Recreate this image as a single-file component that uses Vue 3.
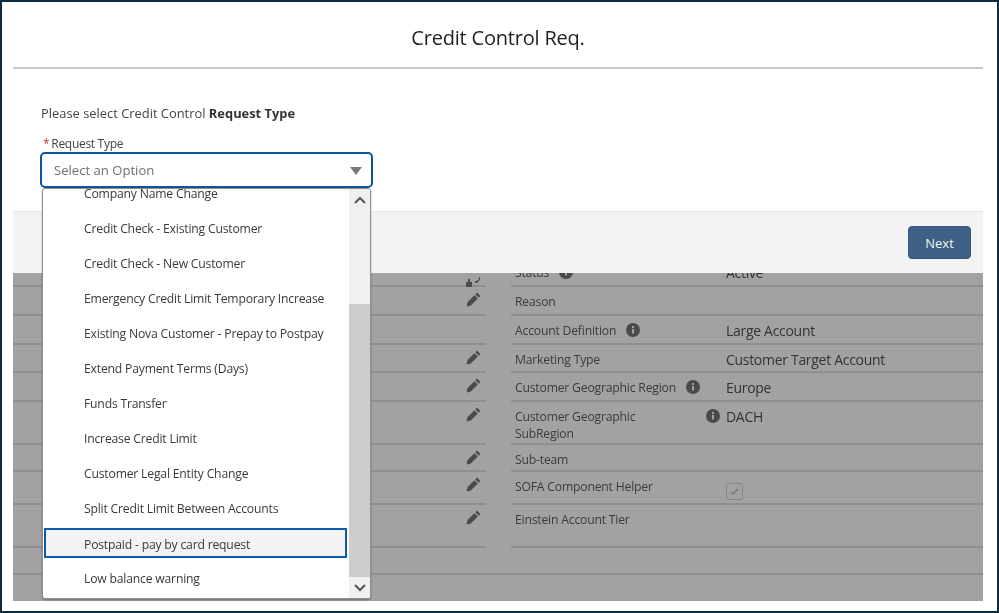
<script setup>
const options = [
  'Company Name Change',
  'Credit Check - Existing Customer',
  'Credit Check - New Customer',
  'Emergency Credit Limit Temporary Increase',
  'Existing Nova Customer - Prepay to Postpay',
  'Extend Payment Terms (Days)',
  'Funds Transfer',
  'Increase Credit Limit',
  'Customer Legal Entity Change',
  'Split Credit Limit Between Accounts',
  'Postpaid - pay by card request',
  'Low balance warning'
]
const rows = [
  { h: 29, label: 'Status', info: true, infoGap: true, value: 'Active', swap: true },
  { h: 29, label: 'Reason', pencil: true },
  { h: 29, label: 'Account Definition', info: true, infoGap: true, value: 'Large Account' },
  { h: 28, label: 'Marketing Type', value: 'Customer Target Account', pencil: true },
  { h: 29, label: 'Customer Geographic Region', info: true, infoGap: true, value: 'Europe', pencil: true },
  { h: 43, label: 'Customer Geographic SubRegion', info: true, wrap: true, value: 'DACH', pencil: true },
  { h: 27, label: 'Sub-team', pencil: true },
  { h: 33, label: 'SOFA Component Helper', check: true, pencil: true },
  { h: 43, label: 'Einstein Account Tier', pencil: true }
]
</script>

<template>
  <div class="frame">
    <div class="modal">
      <header class="head"><h1>Credit Control Req.</h1></header>
      <section class="body">
        <p class="intro">Please select Credit Control <b>Request Type</b></p>
        <div class="label"><span class="req">*</span>Request Type</div>
        <div class="input">
          <span>Select an Option</span>
          <svg class="caret" width="12" height="8" viewBox="0 0 12 8"><path d="M0 0h12L6 8z" fill="#7a7a7a"/></svg>
        </div>
        <div class="menu">
          <ul class="list">
            <li v-for="o in options" :key="o" :class="{ focus: o.startsWith('Postpaid') }">{{ o }}</li>
          </ul>
          <div class="scroll">
            <div class="btn up">
              <svg width="12" height="8" viewBox="0 0 12 8"><path d="M1 7l5-5 5 5" fill="none" stroke="#555" stroke-width="2"/></svg>
            </div>
            <div class="track-top"></div>
            <div class="thumb"></div>
            <div class="btn down">
              <svg width="12" height="8" viewBox="0 0 12 8"><path d="M1 1l5 5 5-5" fill="none" stroke="#555" stroke-width="2"/></svg>
            </div>
          </div>
        </div>
      </section>
      <footer class="foot"><button class="next">Next</button></footer>
      <section class="detail">
        <div class="rows">
          <div v-for="r in rows" :key="r.label" class="row" :style="{ height: r.h + 'px' }">
            <div class="left">
              <svg v-if="r.swap" class="swap" width="16" height="14" viewBox="0 0 16 14"><path d="M1 9h6v5H1zM3 6h2v3H3zM10 8c3 0 4-1 4-4h1c0 4-2 6-5 6z" fill="#4a4a4a"/></svg>
              <svg v-if="r.pencil" class="pencil" width="15" height="15" viewBox="0 0 15 15"><path d="M11 .6l3.4 3.4-1.7 1.7-3.4-3.4zM8.4 3.2l3.4 3.4-7 7L.6 14.4l.8-4.2z" fill="#4a4a4a"/></svg>
            </div>
            <div class="right">
              <div class="name" :class="{ wrap: r.wrap }">
                <span class="txt">{{ r.label }}</span>
                <svg v-if="r.info" class="info" :class="{ inline: r.infoGap }" width="14" height="14" viewBox="0 0 14 14"><circle cx="7" cy="7" r="7" fill="#4a4a4a"/><path d="M6 6h2v4.500H6zM6 3h2v2H6z" fill="#a2a2a2"/></svg>
              </div>
              <div class="value">
                {{ r.value }}
                <span v-if="r.check" class="check"><svg width="11" height="9" viewBox="0 0 11 9"><path d="M2 5l2 2 5-5" fill="none" stroke="#808080" stroke-width="1.800"/></svg></span>
              </div>
            </div>
          </div>
          <div class="full"></div>
        </div>
      </section>
    </div>
  </div>
</template>

<style scoped>
.frame {
  width: 999px;
  height: 613px;
  box-sizing: border-box;
  border: 2px solid #0c2c40;
  background: #fff;
  padding: 0 14px 10px 11px;
  font-family: "Open Sans", "Noto Sans", sans-serif;
  color: #3e3e3c;
  overflow: hidden;
}
.modal { position: relative; display: flex; flex-direction: column; height: 100%; filter: blur(0.3px); }
.head {
  height: 65px;
  border-bottom: 2px solid #c9c9c9;
  display: flex;
  align-items: center;
  justify-content: center;
}
h1 { margin: 6px 0 0; font-size: 20px; font-weight: 400; color: #1f1f1f; letter-spacing: -0.2px; }
.body { position: relative; height: 142px; padding: 35px 0 0 28px; box-sizing: border-box; }
.intro { margin: 0; font-size: 12.900px; line-height: 18px; color: #444; }
.intro b { font-weight: 700; color: #333; }
.label { margin-top: 14px; font-size: 12px; letter-spacing: -0.3px; line-height: 16px; color: #444; padding-left: 2px; }
.req { color: #c23934; margin-right: 2px; }
.input {
  margin-top: 0;
  width: 333px;
  height: 36px;
  margin-left: -1px;
  box-sizing: border-box;
  border: 2px solid #0b559f;
  border-radius: 5px;
  background: #fff;
  display: flex;
  align-items: center;
  justify-content: space-between;
  padding: 0 9px 0 12px;
  font-size: 13.100px;
  color: #6f6f6f;
}
.caret { margin-top: 2px; }
.menu {
  position: absolute;
  left: 29px;
  top: 119px;
  width: 329px;
  height: 411px;
  box-sizing: border-box;
  background: #fff;
  border: 1px solid #8e8e8e;
  border-radius: 3px;
  box-shadow: 0 1px 2px rgba(0, 0, 0, .3);
  display: flex;
  overflow: hidden;
  z-index: 5;
}
.list { list-style: none; margin: -13px 0 0; padding: 0 2px 0 1px; flex: 1; min-width: 0; }
.list li {
  height: 35px;
  box-sizing: border-box;
  display: flex;
  align-items: center;
  padding-left: 40px;
  font-size: 12.200px;
  letter-spacing: -0.2px;
  color: #3a3a3a;
  white-space: nowrap;
}
.list li.focus {
  border: 2px solid #0b5cab;
  background: #f3f3f3;
  padding: 2px 0 0 38px;
  height: 30px;
  margin: 2px 0 3px;
}
.scroll { width: 21px; display: flex; flex-direction: column; background: #f0f0f0; flex: none; }
.btn { height: 21px; display: flex; align-items: center; justify-content: center; flex: none; }
.track-top { height: 94px; flex: none; }
.thumb { flex: 1; background: #cdcdcd; }
.foot {
  height: 62px;
  box-sizing: border-box;
  background: #f3f3f3;
  border-top: 1px solid #e6e6e6;
  display: flex;
  align-items: center;
  justify-content: flex-end;
  padding: 0 12px 0 0;
  position: relative;
  z-index: 2;
}
.next {
  width: 63px;
  height: 33px;
  border: 1px solid #35567a;
  border-radius: 4px;
  background: #3e6085;
  color: #f2f2f2;
  font: 400 13px "Open Sans", "Noto Sans", sans-serif;
}
.detail { flex: 1; background: #a2a2a2; overflow: hidden; min-height: 0; }
.rows { margin-top: -15px; }
.row { display: flex; box-sizing: border-box; color: #333; }
.left {
  width: 473px;
  flex: none;
  box-sizing: border-box;
  border-bottom: 2px solid #8f8f8f;
  display: flex;
  justify-content: flex-end;
  padding: 4px 5px 0 0;
}
.pencil { margin-top: 1px; }
.swap { margin-top: 11px; }
.right {
  margin-left: 25px;
  flex: 1;
  box-sizing: border-box;
  border-bottom: 2px solid #8f8f8f;
  display: flex;
  padding: 6px 0 0 4px;
}
.name { width: 211px; flex: none; display: flex; align-items: flex-start; font-size: 12.200px; letter-spacing: -0.2px; line-height: 17px; color: #3b3b3b; }
.name.wrap { position: relative; }
.name.wrap .txt { width: 150px; }
.info { flex: none; margin-left: auto; margin-top: 1px; margin-right: 6px; }
.info.inline { margin-left: 10px; margin-right: 0; }
.value { font-size: 14px; letter-spacing: -0.3px; line-height: 17px; color: #333; }
.check {
  display: flex;
  align-items: center;
  justify-content: center;
  width: 17px;
  height: 17px;
  box-sizing: border-box;
  border: 1px solid #868686;
  border-radius: 3px;
  margin-top: 5px;
}
.full { height: 27px; border-top: 2px solid #8f8f8f; margin-top: 25px; }
</style>

<style>
html, body { margin: 0; background: #fff; }
</style>
